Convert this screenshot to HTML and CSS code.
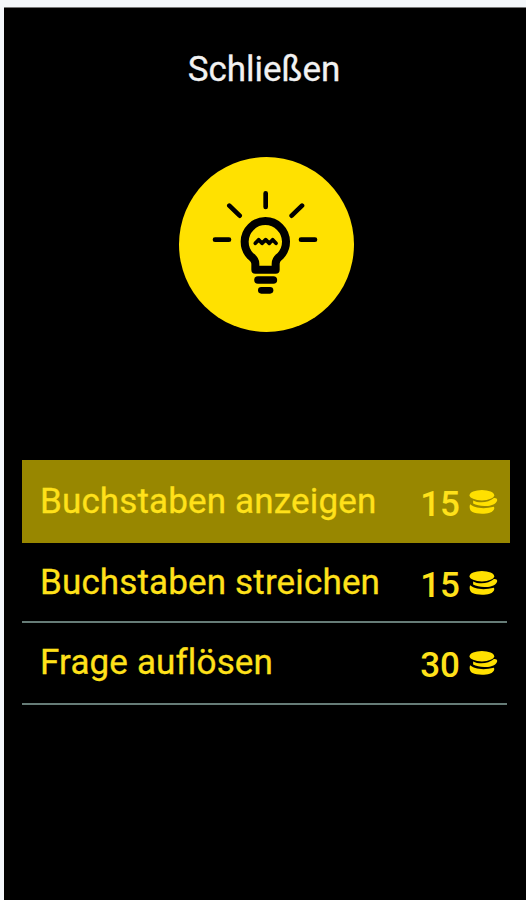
FILE: index.html
```html
<!DOCTYPE html>
<html lang="de">
<head>
  <meta charset="UTF-8" />
  <meta name="viewport" content="width=device-width, initial-scale=1.0" />
  <title>Hilfe</title>
  <link rel="stylesheet" href="styles.css">
</head>
<body>
  <svg width="0" height="0" class="defs">
    <symbol id="coins" viewBox="0 0 88 74">
      <ellipse cx="39" cy="16" rx="38" ry="16" />
      <path d="M12 32 C28 41 60 40 76 25 C86 23 90 32 82 39 C72 52 30 53 12 42 Z" />
      <path d="M3 44 C14 55 42 60 76 52 C80 58 74 66 63 70 C48 75 22 74 10 68 C2 64 -1 53 3 44 Z" />
    </symbol>
  </svg>

  <div class="screen">
    <div class="close">Schließen</div>

    <svg class="bulb" viewBox="27 22 525 525">
      <circle cx="289.500" cy="284.500" r="262.500" fill="#ffe100" />
      <g fill="none" stroke="#000" stroke-linecap="round" stroke-linejoin="round">
        <path stroke-width="14" d="M287 131 V172 M178 168 L209 198 M396 168 L365 198 M135 270 H177 M393 270 H435" />
        <path stroke-width="24" d="M256 360 V342 C256 328 248 325 241 319 A62 62 0 1 1 331 319 C324 325 317 328 317 342 V360 Z" />
        <path stroke-width="11" d="M256 281 L266 270 L276 281 L287 270 L298 281 L308 270 L318 281" />
        <path stroke-width="23" d="M264 391 H310" />
        <path stroke-width="20" d="M274 422 H300" />
      </g>
    </svg>

    <div class="options">
      <div class="option active">
        <span class="label">Buchstaben anzeigen</span>
        <span class="price">15</span>
        <svg class="coins"><use href="#coins" /></svg>
      </div>
      <div class="option">
        <span class="label">Buchstaben streichen</span>
        <span class="price">15</span>
        <svg class="coins"><use href="#coins" /></svg>
      </div>
      <div class="option last">
        <span class="label">Frage auflösen</span>
        <span class="price">30</span>
        <svg class="coins"><use href="#coins" /></svg>
      </div>
    </div>
  </div>
</body>
</html>
```
FILE: styles.css
```css
* {
  box-sizing: border-box;
}

body {
  margin: 0;
  padding: 7px 0 0 4px;
  background: #f4f7fa;
  font-family: Roboto, sans-serif;
  height: 900px;
  overflow: hidden;
}

.defs {
  display: block;
}

.screen {
  height: 893px;
  background: #000;
  border-top: 1px solid #777;
  display: flex;
  flex-direction: column;
  align-items: flex-start;
}

.close {
  width: 520px;
  margin-top: 41px;
  text-align: center;
  color: #f2f2f2;
  font-size: 35px;
  line-height: 42px;
  -webkit-text-stroke: 0.3px;
}

.bulb {
  width: 175px;
  height: 175px;
  margin: 66px 0 0 175px;
}

.options {
  width: 485px;
  margin: 128px 0 0 18px;
}

.option {
  display: flex;
  align-items: center;
  height: 80px;
  padding: 0 9px 0 18px;
  border-bottom: 2px solid #667c77;
  color: #ffe11a;
}

.option.active {
  width: 488px;
  height: 83px;
  padding-right: 12px;
  border-bottom: none;
  background: #988700;
}

.option.last {
  height: 82px;
  padding-bottom: 1px;
}

.label {
  flex: 1;
  font-size: 35px;
  letter-spacing: 0.15px;
  white-space: nowrap;
  -webkit-text-stroke: 0.3px;
}

.price {
  font-size: 35px;
  font-weight: 500;
  margin: 6px 9px 0 0;
}

.coins {
  width: 29px;
  height: 24px;
  margin-top: 1px;
  fill: #ffe000;
}
```
